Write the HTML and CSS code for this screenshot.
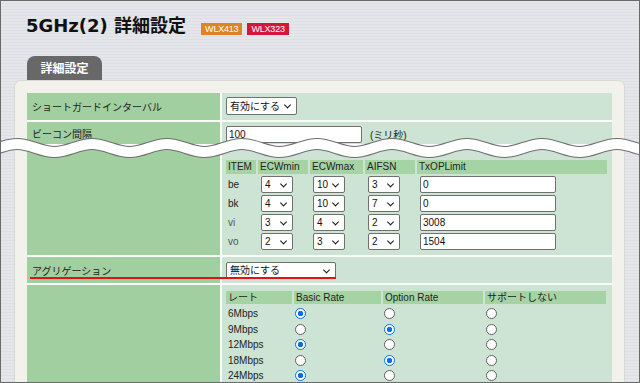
FILE: index.html
```html
<!DOCTYPE html>
<html lang="ja">
<head>
<meta charset="UTF-8">
<meta name="viewport" content="width=device-width, initial-scale=1.0">
<title>5GHz(2) 詳細設定</title>
<link rel="stylesheet" href="styles.css">
</head>
<body>
<div class="screen">
  <div class="head">
    <h1 class="title"><span class="en">5GHz(2) </span>詳細設定</h1>
    <span class="badge orange">WLX413</span>
    <span class="badge red">WLX323</span>
  </div>

  <div class="tab">詳細設定</div>

  <div class="panel">
    <div class="grid">
      <div class="row r1">
        <div class="lbl">ショートガードインターバル</div>
        <div class="val">
          <span class="sel w71"><select><option>有効にする</option></select></span>
        </div>
      </div>

      <div class="row r2">
        <div class="lbl">ビーコン間隔</div>
        <div class="val">
          <input class="txt w136" value="100">
          <span class="unit">(ミリ秒)</span>
        </div>
      </div>

      <div class="row r3">
        <div class="lbl"></div>
        <div class="val">
          <div class="edca">
            <div class="th">ITEM</div>
            <div class="th">ECWmin</div>
            <div class="th">ECWmax</div>
            <div class="th">AIFSN</div>
            <div class="th">TxOPLimit</div>

            <div class="td">be</div>
            <div class="td"><span class="sel w32"><select><option>4</option></select></span></div>
            <div class="td"><span class="sel w32"><select><option>10</option></select></span></div>
            <div class="td"><span class="sel w32"><select><option>3</option></select></span></div>
            <div class="td"><input class="txt w136" value="0"></div>

            <div class="td">bk</div>
            <div class="td"><span class="sel w32"><select><option>4</option></select></span></div>
            <div class="td"><span class="sel w32"><select><option>10</option></select></span></div>
            <div class="td"><span class="sel w32"><select><option>7</option></select></span></div>
            <div class="td"><input class="txt w136" value="0"></div>

            <div class="td soft">vi</div>
            <div class="td"><span class="sel w32"><select><option>3</option></select></span></div>
            <div class="td"><span class="sel w32"><select><option>4</option></select></span></div>
            <div class="td"><span class="sel w32"><select><option>2</option></select></span></div>
            <div class="td"><input class="txt w136" value="3008"></div>

            <div class="td soft">vo</div>
            <div class="td"><span class="sel w32"><select><option>2</option></select></span></div>
            <div class="td"><span class="sel w32"><select><option>3</option></select></span></div>
            <div class="td"><span class="sel w32"><select><option>2</option></select></span></div>
            <div class="td"><input class="txt w136" value="1504"></div>
          </div>
        </div>
      </div>

      <div class="row r4">
        <div class="lbl">アグリゲーション</div>
        <div class="val">
          <span class="sel w110"><select><option>無効にする</option></select></span>
        </div>
        <div class="mark"></div>
      </div>

      <div class="row r5">
        <div class="lbl">受信レート</div>
        <div class="val">
          <div class="rates">
            <div class="th">レート</div>
            <div class="th">Basic Rate</div>
            <div class="th">Option Rate</div>
            <div class="th">サポートしない</div>

            <div class="td">6Mbps</div>
            <div class="td rd"><input type="radio" name="r6" checked></div>
            <div class="td rd"><input type="radio" name="r6"></div>
            <div class="td rd"><input type="radio" name="r6"></div>

            <div class="td">9Mbps</div>
            <div class="td rd"><input type="radio" name="r9"></div>
            <div class="td rd"><input type="radio" name="r9" checked></div>
            <div class="td rd"><input type="radio" name="r9"></div>

            <div class="td">12Mbps</div>
            <div class="td rd"><input type="radio" name="r12" checked></div>
            <div class="td rd"><input type="radio" name="r12"></div>
            <div class="td rd"><input type="radio" name="r12"></div>

            <div class="td">18Mbps</div>
            <div class="td rd"><input type="radio" name="r18"></div>
            <div class="td rd"><input type="radio" name="r18" checked></div>
            <div class="td rd"><input type="radio" name="r18"></div>

            <div class="td">24Mbps</div>
            <div class="td rd"><input type="radio" name="r24" checked></div>
            <div class="td rd"><input type="radio" name="r24"></div>
            <div class="td rd"><input type="radio" name="r24"></div>

            <div class="td">36Mbps</div>
            <div class="td rd"><input type="radio" name="r36"></div>
            <div class="td rd"><input type="radio" name="r36" checked></div>
            <div class="td rd"><input type="radio" name="r36"></div>

            <div class="td">48Mbps</div>
            <div class="td rd"><input type="radio" name="r48"></div>
            <div class="td rd"><input type="radio" name="r48" checked></div>
            <div class="td rd"><input type="radio" name="r48"></div>

            <div class="td">54Mbps</div>
            <div class="td rd"><input type="radio" name="r54"></div>
            <div class="td rd"><input type="radio" name="r54" checked></div>
            <div class="td rd"><input type="radio" name="r54"></div>
          </div>
        </div>
      </div>
    </div>
  </div>

  <!-- 省略線 -->
  <svg class="wave" width="640" height="40" viewBox="0 124 640 40">
    <defs>
      <path id="wv" d="M -58 144 c 13.7 0 23.8 8 37.5 8 s 23.8 -8 37.5 -8 s 23.8 8 37.5 8 s 23.8 -8 37.5 -8 s 23.8 8 37.5 8 s 23.8 -8 37.5 -8 s 23.8 8 37.5 8 s 23.8 -8 37.5 -8 s 23.8 8 37.5 8 s 23.8 -8 37.5 -8 s 23.8 8 37.5 8 s 23.8 -8 37.5 -8 s 23.8 8 37.5 8 s 23.8 -8 37.5 -8 s 23.8 8 37.5 8 s 23.8 -8 37.5 -8 s 23.8 8 37.5 8 s 23.8 -8 37.5 -8 s 23.8 8 37.5 8 s 23.8 -8 37.5 -8 s 23.8 8 37.5 8" fill="none"/>
    </defs>
    <use href="#wv" stroke="#6e6e6e" stroke-width="12"/>
    <use href="#wv" stroke="#ffffff" stroke-width="10"/>
  </svg>
</div>
</body>
</html>
```

FILE: styles.css
```css
*{margin:0;padding:0;box-sizing:border-box}
body{font-family:"Liberation Sans","Noto Sans CJK JP",sans-serif;font-size:10px;color:#222;background:#fff}

.screen{position:relative;width:640px;height:383px;overflow:hidden;border:1px solid #6a6a6a;
  background:repeating-linear-gradient(to bottom,#e4e6ea 0,#e4e6ea 2px,#dcdfe4 2px,#dcdfe4 3px)}

/* 見出し */
.head{display:flex;align-items:baseline;padding:11px 0 0 25px}
.title{font-family:"Noto Sans CJK JP",sans-serif;font-size:18px;font-weight:bold;line-height:24px;color:#111}
.title .en{font-family:"DejaVu Sans",sans-serif;white-space:pre}
.badge{color:#fff;font-size:9px;letter-spacing:-0.2px;line-height:12px;height:12px;padding:0 4px}
.badge.orange{background:#df8425;margin-left:15px}
.badge.red{background:#d7153b;margin-left:5px}

.tab{margin:18px 0 0 26px;width:75px;height:24px;line-height:24px;text-align:center;
  background:#686868;color:#fff;font-family:"Noto Sans CJK JP",sans-serif;font-size:12px;font-weight:bold;
  border-radius:8px 8px 0 0}

.panel{margin:0 14px 0 13px;background:#f2f1ec;border:1px solid #d9d8d2;border-radius:7px;padding:12px 12px 40px}

/* 設定表 */
.grid{display:flex;flex-direction:column;gap:2px;background:#fbfbf9}
.row{display:grid;grid-template-columns:193px 1fr;column-gap:2px;position:relative}
.lbl{background:#a2cf9f;padding-left:5px;display:flex;align-items:center;color:#222}
.val{background:#cde3d3;padding:4px 4px;display:flex;align-items:center}

.r1 .val{padding:4px 4px 5px}
.r2 .val{padding:4px 4px 1px}
.r3 .val{padding:14px 4px 5px;display:block}
.r4 .val{padding:5px 4px 4px}
.r5{min-height:202px}
.r5 .val{padding:6px 4px;display:block;align-self:stretch}

.mark{position:absolute;left:3px;top:20px;width:306px;height:2px;background:#e3101b}

/* フォーム部品 */
.sel{display:inline-block;position:relative}
.sel select{appearance:none;-webkit-appearance:none;width:100%;height:17px;border:1px solid #707070;border-radius:2px;
  background:#fff;font:inherit;color:#111;padding:0 0 0 3px;line-height:15px}
.sel::after{content:"";position:absolute;right:7px;top:50%;width:4px;height:4px;
  border-right:1.6px solid #111;border-bottom:1.6px solid #111;transform:translateY(-70%) rotate(45deg)}
.r1 .sel select{height:18px}
.w32{width:32px}
.w71{width:71px}
.w110{width:110px}

.txt{height:17px;border:1px solid #707070;border-radius:2px;background:#fff;font:inherit;color:#111;padding:0 2px}
.w136{width:136px}
.unit{margin-left:8px}

.edca{display:grid;grid-template-columns:30px 50px 53px 50px 190px;column-gap:2px;row-gap:2px}
.edca .th{height:14px;line-height:14px}
.edca .td{height:17px;display:flex;align-items:center}
.edca .td .sel,.edca .td .txt{margin-left:1px}
.th{background:#a6d3a3;padding-left:2px;color:#222}
.td{padding-left:2px}
.soft{color:#555}

.rates{display:grid;grid-template-columns:66px 87px 100px 121px;column-gap:2px;grid-template-rows:15px;grid-auto-rows:15.5px}
.rates .th{height:13px;line-height:13px}
.rates .td{display:flex;align-items:center}
.rates .rd{padding-left:1px}

input[type=radio]{appearance:none;-webkit-appearance:none;width:11px;height:11px;margin:0;border:1px solid #5f5f5f;
  border-radius:50%;background:#fff}
input[type=radio]:checked{border:1.5px solid #0b6fe0;background:radial-gradient(circle,#0b6fe0 0,#0b6fe0 2.4px,#fff 3px)}

.wave{position:absolute;left:-1px;top:123px}
```
